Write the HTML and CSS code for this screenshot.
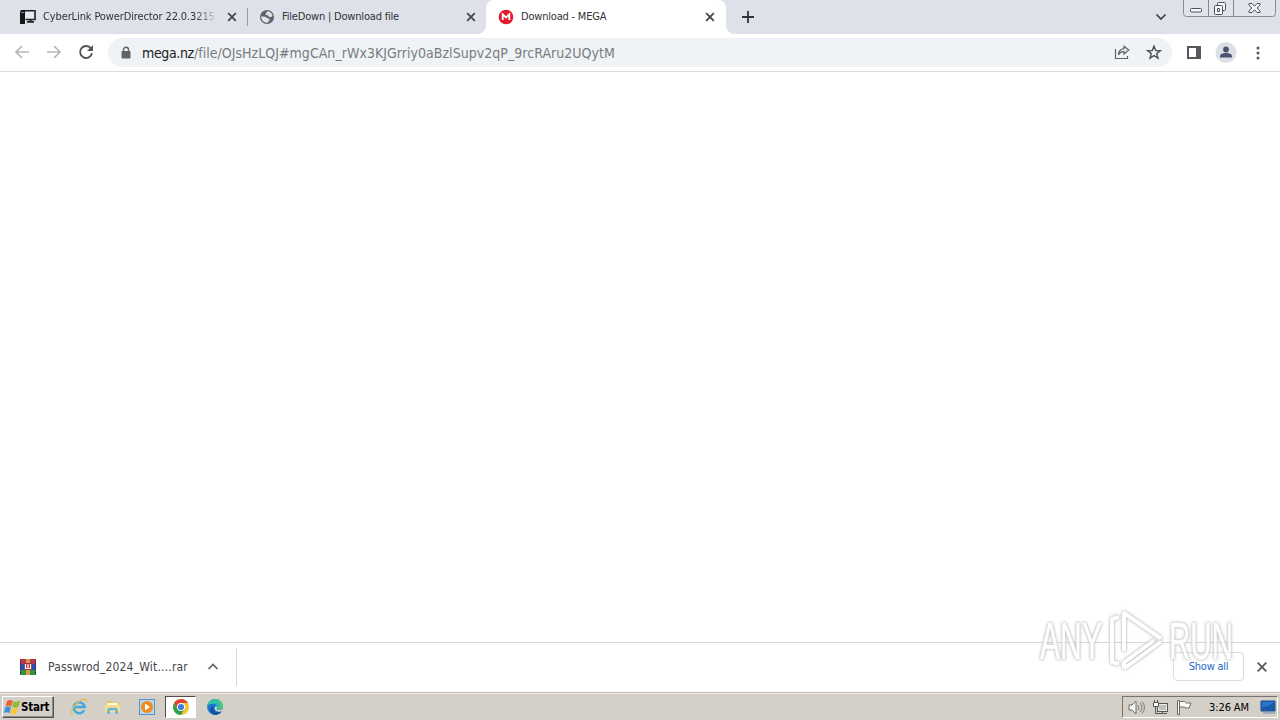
FILE: index.html
```html
<!DOCTYPE html>
<html lang="en">
<head>
<meta charset="utf-8">
<title>Download - MEGA</title>
<link rel="stylesheet" href="styles.css">
</head>
<body>
<div class="desktop">
  <header class="tabstrip">
    <div class="tab tab-first">
      <svg class="icon" width="16" height="16" viewBox="0 0 16 16"><path d="M0 3l1-2h4v14H0z" fill="#161719"/><path d="M1 3.500h3" stroke="#888"/><path d="M5 1.800h10v8.700H5.500" fill="#e7e9ef" stroke="#202124" stroke-width="1.600"/><path d="M9.500 10h2v2H14v1.700H7V12h2.500z" fill="#202124"/></svg>
      <span class="tab-title title-fade">CyberLink PowerDirector 22.0.3215</span>
      <svg class="close" width="10" height="10" viewBox="0 0 10 10"><path d="M1.200 1.200l7.600 7.600M8.800 1.200l-7.600 7.600"/></svg>
    </div>
    <div class="tab tab-second">
      <svg class="icon" width="16" height="16" viewBox="0 0 16 16"><circle cx="8" cy="8" r="7" fill="#5f6368"/><path d="M8.500 2.200c2.500.1 4.500 1.900 5 4.300-.8 1.300-2.200 2.200-3.500 1.200L8.700 6.300 6.600 6.100 7 4.100zM2.300 7.300l4.200.4 1.800 1.500 1.800.4.500 1.600-2.100 2.600C5.200 14 2 11.500 2.300 7.300z" fill="#dee1e6"/></svg>
      <span class="tab-title title-file">FileDown | Download file</span>
      <svg class="close" width="10" height="10" viewBox="0 0 10 10"><path d="M1.200 1.200l7.600 7.600M8.800 1.200l-7.600 7.600"/></svg>
    </div>
    <div class="tab tab-active">
      <svg class="icon" width="16" height="16" viewBox="0 0 16 16"><circle cx="8" cy="8" r="7.300" fill="#e31b2c"/><path d="M4.700 11V5.300L8 8.400l3.300-3.100V11" fill="none" stroke="#fff" stroke-width="1.800"/></svg>
      <span class="tab-title title-mega">Download - MEGA</span>
      <svg class="close" width="10" height="10" viewBox="0 0 10 10"><path d="M1.200 1.200l7.600 7.600M8.800 1.200l-7.600 7.600"/></svg>
    </div>
    <svg class="new-tab" width="12" height="12" viewBox="0 0 12 12"><path d="M6 0v12M0 6h12" stroke="#2f3237" stroke-width="1.800"/></svg>
    <svg class="tab-search" width="12" height="8" viewBox="0 0 12 8"><path d="M1.500 1.500L6 6l4.500-4.500" fill="none" stroke="#3c4043" stroke-width="1.700"/></svg>
    <svg class="window-controls" width="94" height="18" viewBox="0 0 94 18"><path d="M.5 0v13.500q0 3 3 3h86q3 0 3-3V0M25.500 0v16M50.500 0v16" fill="#e1e4eb" stroke="#878a93"/><g fill="#f7f8fa" stroke="#4c505b"><rect x="7.500" y="8.500" width="11" height="3.500" rx="1"/><rect x="34.500" y="2.500" width="8" height="8" rx="1"/><rect x="31.500" y="5.500" width="8" height="9" rx="1"/><path d="M34.500 8.500h2v3h-2z"/><path d="M66 3.500h3l2.500 2.700L74 3.500h3v1.700L74 8l3 2.800v1.700h-3l-2.500-2.700L69 12.500h-3v-1.700L69 8l-3-2.800z"/></g></svg>
  </header>

  <nav class="toolbar">
    <svg class="back" width="16" height="16" viewBox="0 0 16 16"><path d="M15 8H2.500M8 2L2 8l6 6" fill="none" stroke="#b4b6b9" stroke-width="1.700"/></svg>
    <svg class="forward" width="16" height="16" viewBox="0 0 16 16"><path d="M1 8h12.500M8 2l6 6-6 6" fill="none" stroke="#b4b6b9" stroke-width="1.700"/></svg>
    <svg class="reload" width="16" height="16" viewBox="0 0 16 16"><path d="M13 4.500A6 6 0 1 0 14 9.300" fill="none" stroke="#505357" stroke-width="1.900"/><path d="M15 1v6H9z" fill="#505357"/></svg>
    <div class="omnibox">
      <svg class="lock" width="10" height="14" viewBox="0 0 10 14"><path d="M2.500 6V3.700a2.500 2.500 0 0 1 5 0V6" fill="none" stroke="#5f6368" stroke-width="1.400"/><rect x=".5" y="5" width="9" height="7.500" rx="1" fill="#5f6368"/></svg>
      <span class="url"><span class="host">mega.nz</span><span class="path">/file/OJsHzLQJ#mgCAn_rWx3KJGrriy0aBzlSupv2qP_9rcRAru2UQytM</span></span>
      <svg class="share" width="16" height="16" viewBox="0 0 16 16" fill="none" stroke="#5f6368" stroke-width="1.200"><path d="M1.500 4v9.500h12V11"/><path d="M10 1.200L14.800 5 10 9V6.700c-2.600 0-4.300.9-5.700 3.200.3-3.200 2.300-5.800 5.700-6.200z"/></svg>
      <svg class="star" width="16" height="16" viewBox="0 0 16 16"><path d="M8 1l1.700 4.500 4.700.2-3.700 2.900 1.300 4.600L8 10.600l-4 2.600 1.300-4.600-3.700-2.900 4.700-.2z" fill="none" stroke="#505357" stroke-width="1.400"/></svg>
    </div>
    <svg class="side-panel" width="14" height="14" viewBox="0 0 14 14"><rect x="1" y="1" width="12" height="11" fill="#fff" stroke="#54575c" stroke-width="2"/><path d="M9 0h5v13H9z" fill="#54575c"/></svg>
    <svg class="avatar" width="22" height="22" viewBox="0 0 22 22"><circle cx="11" cy="10.500" r="10.500" fill="#dcdfe6"/><circle cx="11" cy="7.500" r="2.900" fill="#48536f"/><path d="M5 15.500v-1.300c0-2.200 3-3.200 6-3.200s6 1 6 3.200v1.300z" fill="#48536f"/></svg>
    <svg class="more" width="4" height="14" viewBox="0 0 4 14" fill="#54575c"><circle cx="2" cy="2" r="1.500"/><circle cx="2" cy="7" r="1.500"/><circle cx="2" cy="12" r="1.500"/></svg>
  </nav>

  <main class="page"></main>

  <section class="downloads">
    <div class="download-item">
      <svg class="archive" width="16" height="16" viewBox="0 0 16 16"><path d="M0 0h16v5H0z" fill="#b8354a"/><path d="M0 5h16v6H0z" fill="#304db0"/><path d="M0 11h16v5H0z" fill="#2e9341"/><path d="M.5 1v14M15.500 1v14" stroke="#382f52" stroke-dasharray="2 1"/><path d="M6 0h4v16H6z" fill="#d99a4a"/><path d="M4 4h8v7H4z" fill="#9b3440"/><path d="M5.500 5v4.500h5V5M8 5v4" fill="none" stroke="#fff" stroke-width="1.200"/></svg>
      <span class="file-name">Passwrod_2024_Wit....rar</span>
      <svg class="chevron-up" width="12" height="8" viewBox="0 0 12 8"><path d="M1.500 6L6 1.500 10.500 6" fill="none" stroke="#5f6368" stroke-width="1.700"/></svg>
    </div>
    <div class="show-all"><span>Show all</span></div>
    <svg class="shelf-close" width="10" height="10" viewBox="0 0 10 10"><path d="M.7.7l8.600 8.600M9.300.7L.7 9.300" stroke="#55585d" stroke-width="1.800"/></svg>
  </section>

  <footer class="taskbar">
    <div class="start">
      <svg width="17" height="17" viewBox="0 0 16 16"><path d="M3 1.800q2.500-1.800 5.300-.2L6.900 7Q4 5.700 1.300 7.300z" fill="#ef6034"/><path d="M9 2.100q2.500 1.400 6.300-.6l-1.700 5.700Q10.500 9 7.600 7.400z" fill="#8cbd35"/><path d="M1.100 8q2.500-1.600 5.500-.2l-1.500 5.400Q2.500 11.900-.2 13.300z" fill="#3c91dd"/><path d="M7.400 8.200q2.700 1.400 5.800 0l-1.500 5.300q-2.700 1.700-5.800.1z" fill="#f8c735"/></svg>
      <span>Start</span>
    </div>
    <svg class="ie" width="18" height="18" viewBox="0 0 18 18"><path d="M14.200 12.200A5.500 5.500 0 1 1 14.700 9H5" fill="none" stroke="#45a9df" stroke-width="2.500"/><path d="M2.500 16.500C-2 13 10-.5 16 1.500c1 .5.800 2 .2 3" fill="none" stroke="#e2bf51" stroke-width="1.300"/></svg>
    <svg class="explorer" width="18" height="18" viewBox="0 0 18 18"><path d="M2 3h5l1.500 1.500H16V14H2z" fill="#e2c46c"/><path d="M3 5h11v4H3z" fill="#fff9d8"/><path d="M1 7h15v7H1z" fill="#f5de8c"/><path d="M4.500 16v-4q0-1 1-1h6q1 0 1 1v4" fill="none" stroke="#69b5d7" stroke-width="2.400"/></svg>
    <svg class="media" width="18" height="18" viewBox="0 0 18 18"><rect x="1.500" y="1.500" width="15" height="15" fill="#b9d7ec" stroke="#5b92c9"/><circle cx="9" cy="9" r="6" fill="#ef8b18"/><path d="M7 5.500l5 3.500-5 3.500z" fill="#fff"/></svg>
    <div class="task-active"><svg width="16" height="16" viewBox="0 0 16 16"><circle cx="8" cy="8" r="8" fill="#f7c52c"/><path d="M1.100 4A8 8 0 0 1 14.900 4H8L4.500 10z" fill="#df4536"/><path d="M1.100 4A8 8 0 0 0 8 16l3.500-6-7 0z" fill="#319f50"/><circle cx="8" cy="8" r="4" fill="#fff"/><circle cx="8" cy="8" r="3.100" fill="#397de4"/></svg></div>
    <svg class="edge" width="16" height="16" viewBox="0 0 16 16"><circle cx="8" cy="8" r="7.900" fill="#1976ce"/><path d="M.3 7C.8 2.500 4 0 8 0c5 0 8 3.700 8 7 0 3-2.500 4.200-5 3.700-1.300-.2-1.600-1-.9-1.900C11.200 5.500 5 2.500.3 7z" fill="#35bda8"/><path d="M8 .1c5 0 8 3.700 8 7 0 3-2.500 4.200-5 3.700 5-2 3-8-3-10.700z" fill="#51cc75"/><path d="M6.500 6.700C4.500 11 8 15 14.500 12.600 12.500 16 8 17 5 14.500 2 12 3 8 6.500 6.700z" fill="#124f9d"/><path d="M10.200 8.500c-1 1.300-.6 2.300 1 2.500 2 .3 3.700-.2 4.800-1.400l-1.200 2.500c-3 1.500-6.500.4-7.100-2.400-.2-1.200.3-2 .9-2.500 1 .2 1.600.6 1.600 1.300z" fill="#d4d0c8"/></svg>
    <div class="tray">
      <svg width="17" height="17" viewBox="0 0 17 17"><path d="M1 6h3l4-4v13l-4-4H1z" fill="#f7f7f5" stroke="#696969"/><path d="M10 6q2 2.500 0 5M12 4q4 4.500 0 9M14 2.500q5 6 0 12" fill="none" stroke="#777"/></svg>
      <svg class="network" width="17" height="17" viewBox="0 0 17 17"><rect x="5.500" y="4.500" width="10" height="8" fill="#bec0bd" stroke="#555757"/><path d="M6.500 5.500h8v6h-8z" fill="none" stroke="#eeeeea"/><path d="M7 14.500h8M10.500 12v3M3.500 6v8.500H7" fill="none" stroke="#555757"/><path d="M2.500 1v3M5.500 1v3M1.500 3.500h5v4h-5z" fill="#fff" stroke="#555"/></svg>
      <svg class="flag" width="17" height="17" viewBox="0 0 17 17"><path d="M1.500 1.500h2v14h-2z" fill="#fff" stroke="#666"/><path d="M3.500 2.500h5l2 1.500H15l-2 5h-3L8 8H3.500z" fill="#fafaf7" stroke="#6d6d6d"/></svg>
      <span class="clock">3:26 AM</span>
      <svg class="desktop-icon" width="16" height="14" viewBox="0 0 16 14"><path d="M1 1h14v10H1z" fill="#2d73cb" stroke="#17477f"/><path d="M2 7q5 1 12-5v8H2z" fill="#1758ab"/><path d="M3 13h12" stroke="#6b8eb1"/></svg>
    </div>
  </footer>

  <svg class="watermark" width="204" height="70" viewBox="0 0 204 70">
    <g class="mark">
      <path d="M85 11l-7 2v43l7 2M90 45V7l37 25.500M90 62.500l37-27M90 62.500v-6l30-22"/>
      <text x="6" y="53" textLength="62" lengthAdjust="spacingAndGlyphs">ANY</text>
      <text x="135" y="53" textLength="64" lengthAdjust="spacingAndGlyphs">RUN</text>
    </g>
  </svg>
</div>
</body>
</html>
```
FILE: styles.css
```css
* { box-sizing: border-box; }
body { margin: 0; overflow: hidden; background: #fff; font-family: "DejaVu Sans Condensed", "DejaVu Sans", sans-serif; font-stretch: condensed; color: #303236; }
svg { display: block; flex-shrink: 0; }
.desktop { position: relative; width: 1280px; height: 720px; display: flex; flex-direction: column; }
.tabstrip { height: 34px; background: #dee1e9; display: flex; align-items: center; }
.tab { height: 34px; display: flex; align-items: center; position: relative; font-size: 11px; white-space: nowrap; }
.tab-first { width: 248px; padding: 0 10px 0 20px; border-right: 1px solid #979ba3; height: 18px; }
.tab-second { width: 238px; padding: 0 10px 0 11px; }
.tab-active { width: 240px; padding: 0 11px 0 12px; background: #fff; border-radius: 8px 8px 0 0; }
.tab-active::before, .tab-active::after { content: ""; position: absolute; bottom: 0; width: 8px; height: 8px; }
.tab-active::before { left: -8px; background: radial-gradient(circle at 0 0, transparent 7.5px, #fff 8px); }
.tab-active::after { right: -8px; background: radial-gradient(circle at 8px 0, transparent 7.5px, #fff 8px); }
.tab-title { margin-left: 7px; line-height: 16px; flex: 1; }
.title-fade { letter-spacing: -.12px; margin-right: 11px; -webkit-mask-image: linear-gradient(to right, #000 152px, transparent 175px); mask-image: linear-gradient(to right, #000 152px, transparent 175px); }
.title-file { letter-spacing: -.19px; }
.title-mega { letter-spacing: -.2px; }
.close { fill: none; stroke: #44474b; stroke-width: 1.8; }
.new-tab { margin-left: 16px; }
.tab-search { margin-left: auto; margin-right: 16px; }
.window-controls { align-self: flex-start; margin-right: 3px; }

.toolbar { height: 38px; border-bottom: 1px solid #d9dbdf; display: flex; align-items: center; padding: 0 20px 0 14px; }
.back, .forward, .reload { margin-bottom: 1px; }
.forward, .reload { margin-left: 16px; }
.omnibox { width: 1064px; height: 29px; margin-left: 14px; border-radius: 15px; background: #f0f3f5; display: flex; align-items: center; padding: 0 10px 0 13px; }
.url { margin-left: 11px; font-size: 14px; line-height: 20px; white-space: nowrap; flex: 1; }
.host { letter-spacing: -.35px; color: #202124; }
.path { letter-spacing: .035px; color: #777c82; }
.share { margin-right: 16px; }
.side-panel { margin-left: 15px; }
.avatar { margin-left: 14px; }
.more { margin-left: auto; }

.page { flex: 1; background: #fff; }
.downloads { height: 50px; border-top: 1px solid #d5d7d9; display: flex; align-items: center; padding: 0 13px 2px 0; }
.download-item { width: 237px; height: 38px; border-right: 1px solid #d4d6d8; display: flex; align-items: center; padding-left: 20px; }
.file-name { margin-left: 12px; width: 141px; font-size: 12px; letter-spacing: .19px; white-space: nowrap; color: #44464a; }
.chevron-up { margin-left: 18px; }
.show-all { width: 71px; height: 29px; margin-left: auto; border: 1px solid #dadce0; border-radius: 4px; color: #2467c4; font-size: 11px; line-height: 13px; letter-spacing: -.25px; padding-bottom: 1px; display: flex; align-items: center; justify-content: center; }
.shelf-close { margin-left: 13px; }

.taskbar { height: 28px; background: #d4d0c8; border-top: 1px solid #bcb9b3; box-shadow: inset 0 1px #f2f0eb; padding: 1px 2px 0 2px; display: flex; align-items: center; }
.start { width: 52px; height: 22px; border: 1px solid; border-color: #fff #55534e #55534e #fff; box-shadow: inset -1px -1px #8d8980; display: flex; align-items: center; padding-left: 1px; font: bold 11.5px "DejaVu Sans Condensed", sans-serif; letter-spacing: -.25px; color: #000; }
.ie { margin-left: 16px; }
.explorer, .media { margin-left: 16px; }
.task-active { width: 31px; height: 22px; margin-left: 9px; background: #fff; border: 1px solid; border-color: #4f4d48 #fff #fff #4f4d48; display: flex; align-items: center; justify-content: center; }
.edge { margin-left: 11px; }
.tray { width: 156px; height: 22px; margin-left: auto; border: 1px solid; border-color: #77746d #fff #fff #77746d; display: flex; align-items: center; padding: 0 1px 0 5px; }
.network { margin-left: 7px; }
.flag { margin-left: 7px; }
.clock { margin-left: 16px; width: 42px; font-size: 11px; white-space: nowrap; letter-spacing: -.1px; color: #000; }
.desktop-icon { margin-left: auto; }

.watermark { position: absolute; left: 1034px; top: 606px; pointer-events: none; }
.mark { fill: none; stroke: #fff; stroke-width: 4px; stroke-linejoin: round; opacity: .8; filter: drop-shadow(0 0 1.200px #a4a6a8) drop-shadow(0 0 1.500px #cfd0d1); }
.mark text { font: 51px/52px "Liberation Sans", sans-serif; fill: #fff; stroke-width: .5px; }
```
